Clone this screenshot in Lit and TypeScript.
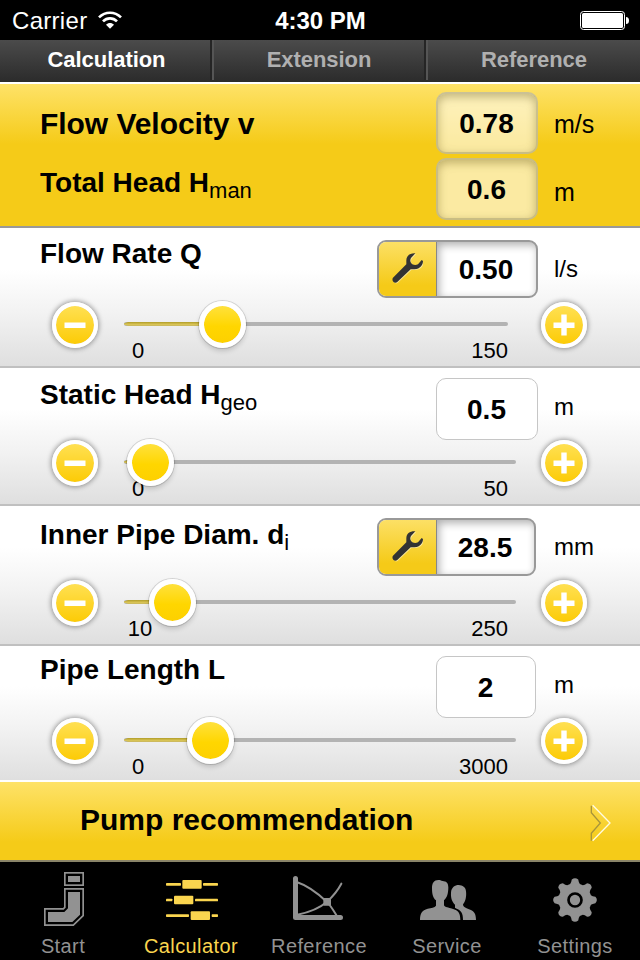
import { LitElement, html, css, svg, nothing } from "lit";
import { customElement, property } from "lit/decorators.js";
import { classMap } from "lit/directives/class-map.js";
import { styleMap } from "lit/directives/style-map.js";

interface Param {
  name: string;
  label: string;
  sub?: string;
  value: string;
  unit: string;
  min: string;
  max: string;
  knob: number;
  tool?: boolean;
}

const PARAMS: Param[] = [
  { name: "rate", label: "Flow Rate Q", value: "0.50", unit: "l/s", min: "0", max: "150", knob: 98, tool: true },
  { name: "head", label: "Static Head H", sub: "geo", value: "0.5", unit: "m", min: "0", max: "50", knob: 26 },
  { name: "diam", label: "Inner Pipe Diam. d", sub: "i", value: "28.5", unit: "mm", min: "10", max: "250", knob: 48, tool: true },
  { name: "length", label: "Pipe Length L", value: "2", unit: "m", min: "0", max: "3000", knob: 86 },
];

const WRENCH = "M70 1C54 0 43 8 43 22V34L3 74C-2 81 5 93 15 88L56 49H68C84 48 93 36 93 24L89 21L78 34C70 38 62 36 58 31C54 26 54 20 57 15Z";

const gearPath = (() => {
  const cx = 1725, cy = 390;
  const p = (r: number, deg: number) => {
    const a = (deg * Math.PI) / 180;
    return `${(cx + r * Math.cos(a)).toFixed(1)} ${(cy + r * Math.sin(a)).toFixed(1)}`;
  };
  let d = "";
  for (let i = 0; i < 8; i++) {
    const a = i * 45;
    d += `${i ? "L" : "M"}${p(50, a - 17)}Q${p(53, a - 12)} ${p(62, a - 9)}Q${p(70, a)} ${p(62, a + 9)}Q${p(53, a + 12)} ${p(50, a + 17)}`;
  }
  return d + "Z";
})();

const TABS = [
  {
    label: "Start",
    icon: svg`
      <g fill="none" stroke="#929292" stroke-width="5">
        <rect x="194.500" y="308.500" width="55" height="37"/>
        <path d="M194.500 356.500H249.500V437L220 465.500H134.500V416.500H190L194.500 412Z"/>
      </g>
      <g fill="#929292">
        <rect x="204" y="318" width="36" height="18"/>
        <path d="M204 366H240V434L217 456H144V426H193L204 415Z"/>
      </g>`,
  },
  {
    label: "Calculator",
    active: true,
    icon: svg`
      <g fill="#fad54f">
        <rect x="498" y="339" width="45" height="8" rx="2"/><rect x="609" y="339" width="45" height="8" rx="2"/>
        <rect x="547" y="330" width="58" height="26" rx="3"/>
        <rect x="498" y="386" width="19" height="8" rx="2"/><rect x="585" y="386" width="69" height="8" rx="2"/>
        <rect x="522" y="377" width="58" height="26" rx="3"/>
        <rect x="498" y="433" width="69" height="8" rx="2"/><rect x="635" y="433" width="19" height="8" rx="2"/>
        <rect x="572" y="424" width="58" height="26" rx="3"/>
      </g>`,
  },
  {
    label: "Reference",
    icon: svg`
      <g fill="none" stroke="#929292" stroke-linecap="round" stroke-linejoin="round">
        <path stroke-width="15" d="M886.500 325.500V442.500H1021.500"/>
        <path stroke-width="6" d="M890 336C932 350 962 378 980 395C993 408 1002 424 1010 437"/>
        <path stroke-width="6" d="M892 434C932 426 958 415 981 395C1002 376 1014 360 1024 341"/>
      </g>
      <rect x="970" y="384" width="23" height="23" rx="2" fill="#929292"/>`,
  },
  {
    label: "Service",
    icon: svg`
      <path fill="#929292" d="M1376 345C1365 345 1354 352 1353 368C1352 386 1357 396 1365 404V414C1384 421 1389 429 1389 450H1428C1428 430 1422 423 1405 417C1395 413 1389 411 1389 403C1396 396 1400 380 1398 364C1397 350 1388 347 1376 345Z"/>
      <path stroke="#000" stroke-width="8" paint-order="stroke" fill="#929292" d="M1315 330C1302 330 1296 339 1296 354C1296 372 1299 384 1308 391V407C1304 413 1294 413 1283 416C1266 421 1260 430 1260 450H1381C1381 430 1376 421 1357 416C1345 413 1335 412 1332 406V391C1341 384 1345 370 1345 352C1345 337 1338 334 1328 333C1323 332 1320 330 1315 330Z"/>
      <rect x="1256" y="450" width="180" height="8" fill="#000"/>`,
  },
  {
    label: "Settings",
    icon: svg`
      <path fill="#929292" d=${gearPath}/>
      <circle cx="1725" cy="390" r="19.500" fill="#929292" stroke="#000" stroke-width="8"/>`,
  },
];

@customElement("value-field")
class ValueField extends LitElement {
  @property() value = "";
  @property({ type: Boolean }) tool = false;
  @property({ type: Boolean }) result = false;

  static styles = css`
    :host { display: flex; box-sizing: border-box; }
    .box {
      flex: 1; display: flex; box-sizing: border-box; overflow: hidden;
      border: 1px solid #c6c6c6; border-radius: 10px; background: #fff;
    }
    .num {
      flex: 1; display: flex; align-items: center; justify-content: center; padding: 2px 1px 0 0;
      font: bold 28px/32px "Liberation Sans", Arial, sans-serif; color: #000;
    }
    .result { border: 2px solid rgba(125, 120, 85, .4); background: rgba(255, 255, 255, .6);
      box-shadow: inset 0 3px 10px rgba(110, 95, 30, .42); }
    .tool { border: 2px solid #999; border-radius: 9px; }
    .tool .num { box-shadow: inset 2px 3px 9px rgba(0, 0, 0, .32); border-left: 1px solid #888; }
    .wrench {
      width: 57px; display: flex; align-items: center; justify-content: center;
      background: linear-gradient(#fce065, #f5ca18 80%, #f5ca18);
    }
    .wrench svg { width: 31px; height: 31px; margin-top: -1px; }
  `;

  render() {
    return html`<div class=${classMap({ box: true, result: this.result, tool: this.tool })}>
      ${this.tool
        ? html`<div class="wrench"><svg viewBox="0 0 93 93">
            <path fill="#fff" opacity=".5" transform="translate(2 2)" d=${WRENCH}/>
            <path fill="#333" d=${WRENCH}/>
          </svg></div>`
        : nothing}
      <div class="num">${this.value}</div>
    </div>`;
  }
}

@customElement("param-row")
class ParamRow extends LitElement {
  @property({ attribute: false }) param!: Param;

  static styles = css`
    :host { display: block; font-family: "Liberation Sans", Arial, sans-serif; color: #000; }
    .row {
      box-sizing: border-box; height: 140px; display: flex; flex-direction: column; justify-content: space-between;
      background: linear-gradient(#fff 0, #fff 30%, #f2f2f2 62%, #dfdfdf 100%); border-bottom: 2px solid #c0c0c0;
    }
    .row.head { height: 138px; }
    .row.length { height: 134px; border-bottom: 0; }
    .top { display: grid; grid-template-columns: 337px 59px 102px 1fr; align-items: start; padding-left: 40px; height: 70px; }
    .label { grid-column: 1; font-size: 28px; line-height: 32px; font-weight: bold; white-space: nowrap; margin-top: 10px; }
    .head .label { margin-top: 11px; }
    .diam .label { margin-top: 13px; }
    .length .label { margin-top: 8px; }
    .sub { font-size: 22px; font-weight: normal; position: relative; top: 6px; line-height: 1px; }
    value-field { grid-column: 3; grid-row: 1; height: 62px; margin-top: 10px; }
    value-field.wide { grid-column: 2 / 4; height: 58px; margin-top: 12px; }
    .diam value-field, .length value-field { margin-right: 2px; }
    .unit { grid-column: 4; grid-row: 1; font-size: 24px; line-height: 28px; margin: 27px 0 0 16px; }
    .head .unit, .length .unit { margin-top: 25px; }
    .control { display: flex; align-items: flex-start; height: 66px; padding: 0 53px 0 51px; }
    .length .control { height: 64px; }
    .btn {
      flex: none; box-sizing: border-box; width: 46px; height: 46px; border-radius: 50%; border: 4px solid #fff; margin: 2px 0 0 .5px;
      background: linear-gradient(#ffe052, #fccb06); background-clip: padding-box; box-shadow: 0 0 5px 1px rgba(0, 0, 0, .38);
      display: flex; align-items: center; justify-content: center;
    }
    .btn svg { width: 22px; height: 22px; display: block; }
    .slider { flex: 1; margin: 0 24.500px 0 26.500px; }
    .track { height: 4px; margin: 22px 0 0; border-radius: 2px; background: #b3b3b3; position: relative; }
    .rate .track { margin-right: 8px; }
    .fill {
      height: 4px; background: linear-gradient(#b09c28, #d9c455 60%, #c8b660);
      clip-path: polygon(0 35%, 4px 0, 100% 0, 100% 100%, 4px 100%, 0 65%);
    }
    .knob {
      position: absolute; top: -21.500px; margin-left: -23.500px; box-sizing: border-box; width: 47px; height: 47px;
      border-radius: 50%; border: 5px solid #fff; background: linear-gradient(#ffe13c, #ffd600 55%, #fdd000);
      background-clip: padding-box; box-shadow: 0 0 0 1px rgba(0, 0, 0, .13), 0 3px 5px rgba(0, 0, 0, .17);
    }
    .range { display: flex; justify-content: space-between; font-size: 22px; line-height: 24px; margin: 13px 8px 0 -2px; }
    .min { width: 32px; text-align: center; }
    .diam .min { width: 36px; }
  `;

  render() {
    const p = this.param;
    const w = `${p.knob}px`;
    return html`<section class="row ${p.name}">
      <div class="top">
        <div class="label">${p.label}${p.sub ? html`<span class="sub">${p.sub}</span>` : nothing}</div>
        <value-field class=${p.tool ? "wide" : ""} .value=${p.value} ?tool=${!!p.tool}></value-field>
        <div class="unit">${p.unit}</div>
      </div>
      <div class="control">
        <div class="btn"><svg viewBox="0 0 22 22"><rect x=".5" y="8.500" width="21" height="5.500" fill="#fff"/></svg></div>
        <div class="slider">
          <div class="track">
            <div class="fill" style=${styleMap({ width: w })}></div>
            <div class="knob" style=${styleMap({ left: w })}></div>
          </div>
          <div class="range"><span class="min">${p.min}</span><span>${p.max}</span></div>
        </div>
        <div class="btn"><svg viewBox="0 0 22 22"><path d="M8.300 .5h5.400v8h7.800v5.500h-7.800v7.500h-5.400v-7.500H.5v-5.500h7.800z" fill="#fff"/></svg></div>
      </div>
    </section>`;
  }
}

@customElement("app-root")
class AppRoot extends LitElement {
  static styles = css`
    :host {
      display: flex; flex-direction: column; width: 640px; height: 960px; overflow: hidden; background: #fff;
      font-family: "Liberation Sans", Arial, sans-serif; color: #000;
    }
    .status {
      height: 40px; background: #000; color: #fff; display: grid; grid-template-columns: 1fr auto 1fr; align-items: center;
      font-size: 24px; line-height: 28px; padding: 0 11px 0 12px;
    }
    .carrier { display: flex; align-items: center; letter-spacing: .3px; margin-top: 2px; }
    .carrier svg { width: 24px; height: 18px; margin: -3px 0 0 11px; }
    .time { font-weight: bold; margin: 2px 0 0; }
    .battery { width: 50px; height: 20px; justify-self: end; }
    .tabs { height: 42px; display: flex; background: linear-gradient(#4b4b4b, #2b2b2b); background-clip: padding-box; border-bottom: 2px solid #fff; }
    .tab { width: 212px; text-align: center; font-weight: bold; font-size: 22px; line-height: 39px; color: #b0b0b0; letter-spacing: -.05px; }
    .tab.on { width: 210px; color: #fff; text-indent: 3px; }
    .sep { width: 2px; height: 40px; background: #252525; border-right: 2px solid #555; }
    .tab:nth-child(3) { width: 210px; }
    .results { height: 142px; border-bottom: 2px solid #999; background: linear-gradient(#fee268, #f5cb18 60px); background-clip: padding-box; padding-left: 40px; }
    .result { display: grid; grid-template-columns: 396px 102px 1fr; align-items: start; height: 66px; box-sizing: border-box; padding-top: 8px; }
    .result value-field { height: 62px; }
    .rlabel { font-weight: bold; font-size: 28px; line-height: 32px; margin-top: 16px; }
    .rlabel.big { font-size: 30px; line-height: 34px; margin-top: 15px; letter-spacing: -.05px; }
    .second .rlabel { margin-top: 9px; }
    .sub { font-size: 22px; font-weight: normal; position: relative; top: 6px; line-height: 1px; }
    .runit { font-size: 25px; line-height: 28px; margin: 18px 0 0 16px; }
    .second .runit { margin-top: 20px; }
    .pump {
      height: 78px; border-top: 2px solid #fff; border-bottom: 2px solid #8a8468;
      background: linear-gradient(#fee268, #f5cb18 60px); background-clip: padding-box; display: flex; align-items: center;
      justify-content: space-between; padding: 0 29px 0 80px; font-weight: bold; font-size: 30px; line-height: 34px;
    }
    .pump span { margin-top: -3px; }
    .pump svg { width: 22px; height: 38px; margin-top: 4px; }
    .bar { height: 98px; background: #000; display: flex; }
    .item { width: 128px; display: flex; flex-direction: column; align-items: center; color: #929292; font-size: 20px; line-height: 24px; letter-spacing: .4px; }
    .item svg { width: 128px; height: 68px; display: block; }
    .item span { margin-top: 4px; margin-right: 2px; }
    .item.on { color: #fad54f; }
  `;

  render() {
    return html`
      <header class="status">
        <div class="carrier">Carrier
          <svg viewBox="0 0 72 54" fill="none" stroke="#fff" stroke-width="8">
            <path d="M3 19C22 .500 50 .500 69 19"/>
            <path d="M15 31C27 19 45 19 57 31"/>
            <path d="M36 53L24 41C31 34 41 34 48 41Z" fill="#fff" stroke="none"/>
          </svg>
        </div>
        <div class="time">4:30 PM</div>
        <svg class="battery" viewBox="0 0 50 20">
          <rect x="1.500" y="1.500" width="44" height="18" rx="3" fill="none" stroke="#fff"/>
          <rect x="3" y="3" width="41" height="15" rx="1.500" fill="#fff"/>
          <path d="M47 7Q50 7 50 10.500Q50 14 47 14Z" fill="#fff"/>
        </svg>
      </header>
      <nav class="tabs">
        <div class="tab on">Calculation</div>
        <div class="sep"></div>
        <div class="tab">Extension</div>
        <div class="sep"></div>
        <div class="tab">Reference</div>
      </nav>
      <section class="results">
        <div class="result">
          <div class="rlabel big">Flow Velocity v</div>
          <value-field result value="0.78"></value-field>
          <div class="runit">m/s</div>
        </div>
        <div class="result second">
          <div class="rlabel">Total Head H<span class="sub">man</span></div>
          <value-field result value="0.6"></value-field>
          <div class="runit">m</div>
        </div>
      </section>
      ${PARAMS.map((p) => html`<param-row .param=${p}></param-row>`)}
      <section class="pump">
        <span>Pump recommendation</span>
        <svg viewBox="0 0 66 114" fill="none">
          <path d="M7 5V26L34 57L7 88V110" stroke="#a8953a" stroke-width="4"/>
          <path d="M11 4L63 57L11 110" stroke="#fffbe0" stroke-width="4"/>
        </svg>
      </section>
      <footer class="bar">
        ${TABS.map(
          (t, i) => html`<div class=${classMap({ item: true, on: !!t.active })}>
            <svg viewBox="${i * 384} 276 384 204">${t.icon}</svg>
            <span>${t.label}</span>
          </div>`,
        )}
      </footer>
    `;
  }
}
